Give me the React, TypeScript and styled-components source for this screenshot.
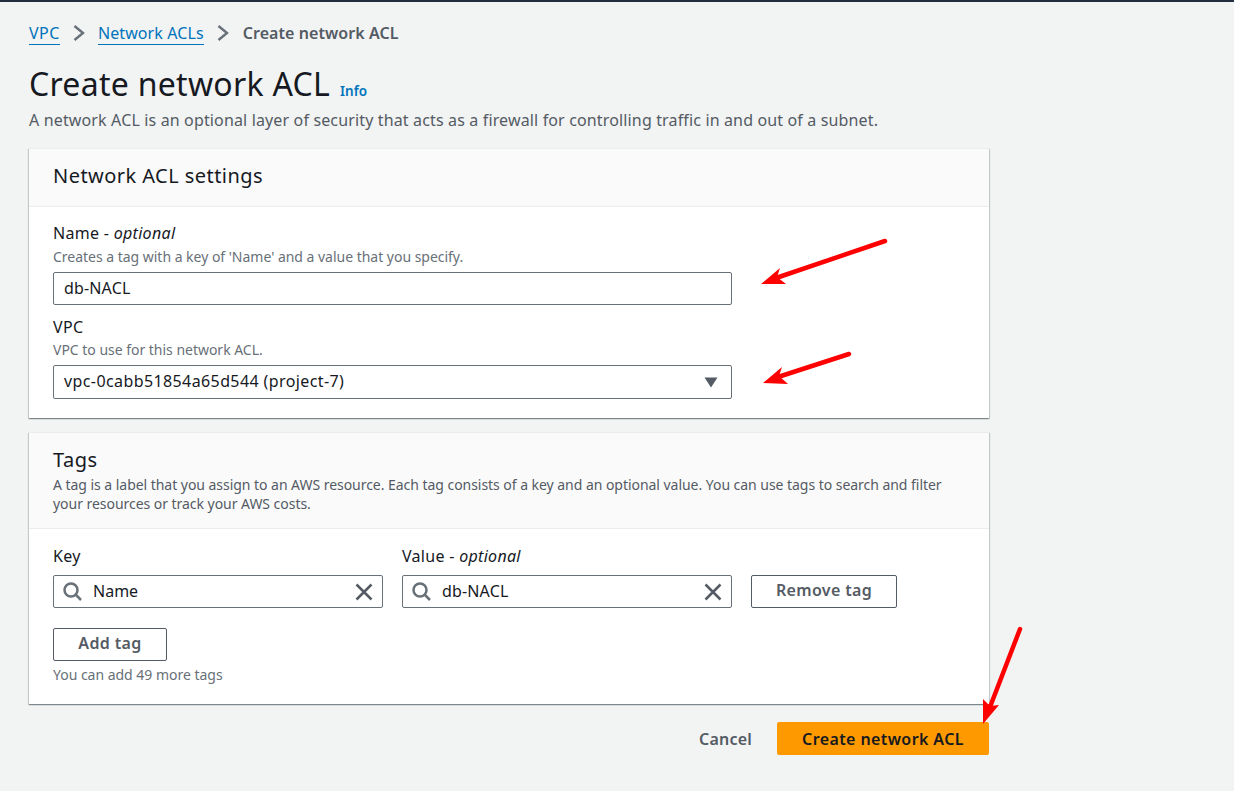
import styled, { createGlobalStyle } from "styled-components";

const GlobalStyle = createGlobalStyle`
  html, body {
    margin: 0;
    padding: 0;
    background: #f2f3f3;
    font-family: "Noto Sans", "Open Sans", sans-serif;
    color: #16191f;
  }
  * { box-sizing: border-box; }
`;

const Page = styled.main`
  position: relative;
  width: 1234px;
  height: 791px;
  overflow: hidden;
  border-top: 2px solid #232f3e;
  padding: 20px 245px 0 29px;
`;

const Crumbs = styled.nav`
  display: flex;
  align-items: center;
  height: 22px;
  font-size: 16px;
`;

const Crumb = styled.a`
  color: #0073bb;
  text-decoration: none;
  border-bottom: 1px solid #0073bb;
  line-height: 21px;
  padding-top: 1px;
  letter-spacing: ${(p: { $ls: number }) => p.$ls}px;
`;

const CrumbCurrent = styled.span`
  color: #545b64;
  font-weight: 600;
  letter-spacing: 0.06px;
  margin-left: 1px;
`;

const CrumbSep = styled.svg`
  width: 12px;
  height: 16px;
  margin: 0 13px;
  fill: none;
  stroke: #687078;
  stroke-width: 2.4;
`;

const TitleRow = styled.div`
  display: flex;
  align-items: baseline;
  gap: 10px;
  margin-top: 18px;
`;

const Title = styled.h1`
  margin: 0;
  font-size: 32px;
  font-weight: 400;
  line-height: 44px;
  letter-spacing: 0.28px;
`;

const Info = styled.a`
  color: #0073bb;
  font-size: 13.5px;
  font-weight: 600;
`;

const Lead = styled.p`
  margin: 3px 0 0;
  font-size: 16px;
  line-height: 22px;
  letter-spacing: 0.146px;
  color: #545b64;
`;

const Card = styled.section`
  background: #fff;
  border-top: 1px solid #eaeded;
  box-shadow: 0 1px 1px 0 rgba(0, 28, 36, 0.3), 1px 1px 1px 0 rgba(0, 28, 36, 0.15),
    -1px 1px 1px 0 rgba(0, 28, 36, 0.15);
  margin-top: ${(p: { $top: number }) => p.$top}px;
`;

const CardHead = styled.header`
  background: #fafafa;
  border-bottom: 1px solid #eaeded;
  padding: ${(p: { $pad: string }) => p.$pad};
`;

const CardTitle = styled.h2`
  margin: 0;
  font-size: 20px;
  font-weight: 400;
  line-height: 27px;
  letter-spacing: 0.45px;
`;

const CardText = styled.p`
  margin: 2px 0 0;
  font-size: 14px;
  line-height: 19px;
  letter-spacing: -0.04px;
  color: #545b64;
`;

const CardBody = styled.div`
  padding: ${(p: { $pad: string }) => p.$pad};
  display: flex;
  flex-direction: column;
`;

const Label = styled.div`
  font-size: 16px;
  line-height: 22px;
  letter-spacing: 0.3px;
  margin-top: ${(p: { $top?: number; $bottom?: number }) => p.$top ?? 0}px;
  margin-bottom: ${(p) => p.$bottom ?? 0}px;

  em { font-style: italic; }
`;

const Hint = styled.div`
  font-size: 14px;
  line-height: 20px;
  letter-spacing: -0.02px;
  color: #687078;
  margin-top: ${(p: { $top?: number }) => p.$top ?? 0}px;
`;

const Box = styled.div`
  display: flex;
  align-items: center;
  width: ${(p: { $w: number; $h: number; $top?: number; $pad?: number }) => p.$w}px;
  height: ${(p) => p.$h}px;
  margin-top: ${(p) => p.$top ?? 0}px;
  background: #fff;
  border: 1px solid #687078;
  border-radius: 2px;
  font-size: 16px;
  padding: 0 ${(p) => p.$pad ?? 10}px;
  color: #16191f;
`;

const BoxText = styled.span`
  flex: 1;
  margin-bottom: 2px;
  letter-spacing: ${(p: { $ls?: number }) => p.$ls ?? 0}px;
`;

const Caret = styled.svg`
  width: 14px;
  height: 11px;
  margin-right: 3px;
  fill: #545b64;
`;

const Icon = styled.svg`
  width: 20px;
  height: 20px;
  fill: none;
  stroke: #687078;
  stroke-width: 2.5;
  flex: none;
`;

const FindIcon = styled(Icon)`
  margin-right: 10px;
`;

const ClearIcon = styled(Icon)`
  stroke: #545b64;
  margin-right: -1px;
`;

const TagRow = styled.div`
  display: flex;
  align-items: flex-end;
  gap: 19px;
`;

const TagField = styled.div`
  display: flex;
  flex-direction: column;
  gap: 8px;
`;

const Button = styled.button`
  height: 33px;
  width: ${(p: { $w: number; $top?: number }) => p.$w}px;
  margin-top: ${(p) => p.$top ?? 0}px;
  background: #fff;
  border: 1px solid #545b64;
  border-radius: 2px;
  color: #545b64;
  font-family: inherit;
  font-size: 16px;
  font-weight: 600;
  letter-spacing: 0.35px;
  padding: 0 0 4px;
`;

const Actions = styled.footer`
  display: flex;
  justify-content: flex-end;
  align-items: center;
  gap: 25px;
  margin-top: 18px;
`;

const Cancel = styled.span`
  color: #545b64;
  font-size: 16px;
  font-weight: 600;
  letter-spacing: 0.2px;
`;

const Primary = styled.button`
  width: 212px;
  height: 33px;
  background: #ff9900;
  border: none;
  border-radius: 2px;
  color: #16191f;
  font-family: inherit;
  font-size: 16px;
  font-weight: 600;
  letter-spacing: 0.4px;
  padding: 0;
`;

const Arrow = styled.svg`
  position: absolute;
  left: 0;
  top: 0;
  overflow: visible;
  stroke: #ff0000;
  fill: #ff0000;
`;

function SearchIcon() {
  return (
    <FindIcon viewBox="0 0 20 20">
      <circle cx="8" cy="8" r="6.5" />
      <path d="M12.5 12.5l5.5 5.5" />
    </FindIcon>
  );
}

function CloseIcon() {
  return (
    <ClearIcon viewBox="0 0 20 20">
      <path d="M2.5 2.5l15 15M17.5 2.5l-15 15" />
    </ClearIcon>
  );
}

function Sep() {
  return (
    <CrumbSep viewBox="0 0 12 16">
      <path d="M1.5 1l8.5 7-8.5 7" />
    </CrumbSep>
  );
}

export default function App() {
  return (
    <Page>
      <GlobalStyle />
      <Crumbs>
        <Crumb $ls={0.5}>VPC</Crumb>
        <Sep />
        <Crumb $ls={0.1}>Network ACLs</Crumb>
        <Sep />
        <CrumbCurrent>Create network ACL</CrumbCurrent>
      </Crumbs>
      <TitleRow>
        <Title>Create network ACL</Title>
        <Info>Info</Info>
      </TitleRow>
      <Lead>A network ACL is an optional layer of security that acts as a firewall for controlling traffic in and out of a subnet.</Lead>

      <Card $top={17}>
        <CardHead $pad="13px 24px 17px">
          <CardTitle>Network ACL settings</CardTitle>
        </CardHead>
        <CardBody $pad="15px 24px 19px">
          <Label $bottom={3}>
            Name - <em>optional</em>
          </Label>
          <Hint>Creates a tag with a key of 'Name' and a value that you specify.</Hint>
          <Box $w={679} $h={33} $top={5}>
            <BoxText $ls={0.15}>db-NACL</BoxText>
          </Box>
          <Label $top={11} $bottom={2}>VPC</Label>
          <Hint>VPC to use for this network ACL.</Hint>
          <Box $w={679} $h={34} $top={5}>
            <BoxText $ls={0.4}>vpc-0cabb51854a65d544 (project-7)</BoxText>
            <Caret viewBox="0 0 14 11">
              <path d="M0.5 0.5h13L7 10.5z" />
            </Caret>
          </Box>
        </CardBody>
      </Card>

      <Card $top={14}>
        <CardHead $pad="13px 24px 15px">
          <CardTitle>Tags</CardTitle>
          <CardText>
            A tag is a label that you assign to an AWS resource. Each tag consists of a key and an optional value. You can use tags to search and filter your resources or track your AWS costs.
          </CardText>
        </CardHead>
        <CardBody $pad="16px 24px 19px">
          <TagRow>
            <TagField>
              <Label>Key</Label>
              <Box $w={330} $h={33} $pad={9}>
                <SearchIcon />
                <BoxText>Name</BoxText>
                <CloseIcon />
              </Box>
            </TagField>
            <TagField>
              <Label>
                Value - <em>optional</em>
              </Label>
              <Box $w={330} $h={33} $pad={9}>
                <SearchIcon />
                <BoxText $ls={0.15}>db-NACL</BoxText>
                <CloseIcon />
              </Box>
            </TagField>
            <Button $w={146}>Remove tag</Button>
          </TagRow>
          <Button $w={114} $top={20}>Add tag</Button>
          <Hint $top={4}>You can add 49 more tags</Hint>
        </CardBody>
      </Card>

      <Actions>
        <Cancel>Cancel</Cancel>
        <Primary>Create network ACL</Primary>
      </Actions>

      <Arrow width="1" height="1">
        <path d="M885 239L776 276" strokeWidth="4.5" strokeLinecap="round" />
        <path d="M761 282L780 266L777 275L786 282z" stroke="none" />
        <path d="M849 352L778 375" strokeWidth="4.5" strokeLinecap="round" />
        <path d="M763 381L782 365L779 374L788 382z" stroke="none" />
        <path d="M1020 627L990 705" strokeWidth="4.5" strokeLinecap="round" />
        <path d="M983 722L983 697L990 704L999 703z" stroke="none" />
      </Arrow>
    </Page>
  );
}
